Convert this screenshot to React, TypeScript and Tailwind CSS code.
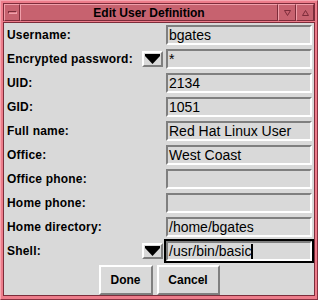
const rows: { label: string; value: string; menu?: boolean; focus?: boolean }[] = [
  { label: 'Username:', value: 'bgates' },
  { label: 'Encrypted password:', value: '*', menu: true },
  { label: 'UID:', value: '2134' },
  { label: 'GID:', value: '1051' },
  { label: 'Full name:', value: 'Red Hat Linux User' },
  { label: 'Office:', value: 'West Coast' },
  { label: 'Office phone:', value: '' },
  { label: 'Home phone:', value: '' },
  { label: 'Home directory:', value: '/home/bgates' },
  { label: 'Shell:', value: '/usr/bin/basic', menu: true, focus: true },
];

function MenuArrow() {
  return (
    <div className="w-[21px] h-[16px] mr-[1px] flex items-center justify-center bg-[#d9d9d9] border-[2px] border-t-white border-l-white border-b-[#7f7f7f] border-r-[#7f7f7f]">
      <svg width="15" height="10" viewBox="0 0 15 10">
        <rect x="0" y="0" width="15" height="2" fill="#000" />
        <polygon points="0,2 15,2 7.5,10" fill="#000" />
      </svg>
    </div>
  );
}

function TitleButton({ children, className = '' }: { children: React.ReactNode; className?: string }) {
  return (
    <div className={`h-[17px] flex items-center justify-center bg-[#c7626f] border border-t-[#f0a0aa] border-l-[#f0a0aa] border-b-[#7c2c3a] border-r-[#7c2c3a] ${className}`}>
      {children}
    </div>
  );
}

export default function App() {
  return (
    <div className="w-[318px] h-[300px] bg-[#ec7c8a] border border-t-[#f6a6b0] border-l-[#f6a6b0] border-b-[#8a3040] border-r-[#8a3040] p-[2px] flex flex-col font-['Liberation_Sans',Arial,sans-serif] text-black">
      <div className="flex h-[18px] border border-[#7c2c3a] bg-[#c7626f]">
        <TitleButton className="w-[16px]">
          <div className="w-[9px] h-[3px] bg-[#d97a86] border border-t-[#7c2c3a] border-l-[#7c2c3a] border-b-[#f0a0aa] border-r-[#f0a0aa]" />
        </TitleButton>
        <TitleButton className="flex-1 text-[12px] font-bold leading-none">Edit User Definition</TitleButton>
        <TitleButton className="w-[18px]">
          <svg width="7" height="6" viewBox="0 0 7 6">
            <polygon points="0.5,0.5 6.5,0.5 3.5,5.5" fill="none" stroke="#7c2c3a" strokeWidth="1" />
          </svg>
        </TitleButton>
        <TitleButton className="w-[18px]">
          <svg width="7" height="6" viewBox="0 0 7 6">
            <polygon points="3.5,0.5 6.5,5.5 0.5,5.5" fill="none" stroke="#7c2c3a" strokeWidth="1" />
          </svg>
        </TitleButton>
      </div>
      <div className="flex-1 mt-[1px] mb-[3px] bg-[#d9d9d9] border border-[#7c2c3a] flex flex-col">
        <div className="flex flex-col">
          {rows.map((r) => (
            <div key={r.label} className="flex items-center h-[24px]">
              <div className="flex-1 pl-[3px] text-[12px] font-bold tracking-[0.2px] leading-none">{r.label}</div>
              {r.menu && <MenuArrow />}
              <div className={`w-[150px] h-[24px] p-[2px] ${r.focus ? 'bg-black' : ''}`}>
                <div className="h-[20px] bg-[#d9d9d9] border-[2px] border-t-[#7f7f7f] border-l-[#7f7f7f] border-b-white border-r-white flex items-center pl-[1px] text-[14px] leading-none whitespace-nowrap">
                  {r.value}
                  {r.focus && <span className="inline-block w-[2px] h-[15px] bg-black" />}
                </div>
              </div>
            </div>
          ))}
        </div>
        <div className="flex justify-center gap-[4px] pt-[2px]">
          <button className="w-[54px] h-[30px] bg-[#d9d9d9] border-[2px] border-t-white border-l-white border-b-[#7f7f7f] border-r-[#7f7f7f] text-[12px] font-bold">Done</button>
          <button className="w-[63px] h-[30px] bg-[#d9d9d9] border-[2px] border-t-white border-l-white border-b-[#7f7f7f] border-r-[#7f7f7f] text-[12px] font-bold">Cancel</button>
        </div>
      </div>
    </div>
  );
}
